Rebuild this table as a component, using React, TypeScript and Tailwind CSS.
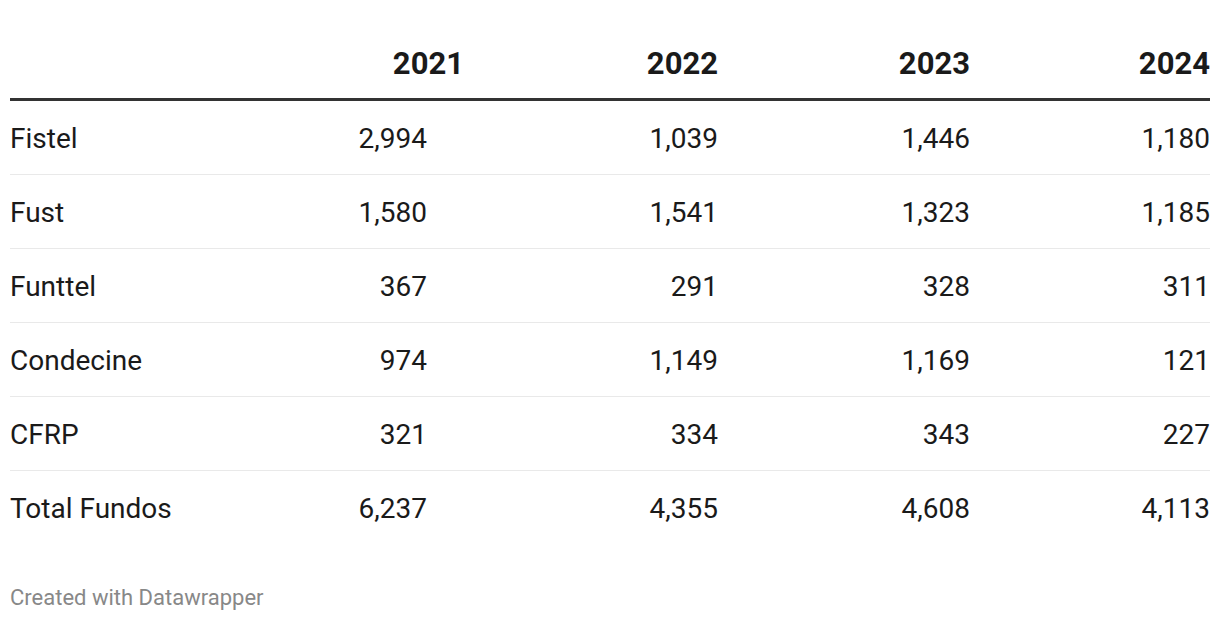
const rows = [
  { label: 'Fistel', values: ['2,994', '1,039', '1,446', '1,180'] },
  { label: 'Fust', values: ['1,580', '1,541', '1,323', '1,185'] },
  { label: 'Funttel', values: ['367', '291', '328', '311'] },
  { label: 'Condecine', values: ['974', '1,149', '1,169', '121'] },
  { label: 'CFRP', values: ['321', '334', '343', '227'] },
  { label: 'Total Fundos', values: ['6,237', '4,355', '4,608', '4,113'] },
]

const years = ['2021', '2022', '2023', '2024']

const cols = 'grid grid-cols-[200px_217px_291px_252px_240px]'

export default function App() {
  return (
    <div className="min-h-screen bg-white px-[10px] font-['Roboto',sans-serif] text-[#1a1a1a]">
      {/* header */}
      <div className="grid h-[101px] grid-cols-[200px_254px_254px_252px_240px] items-end border-b-[3px] border-[#333333] pb-[19px]">
        <div />
        {years.map((y) => (
          <div key={y} className="text-right text-[31px] leading-[31px] font-bold">
            {y}
          </div>
        ))}
      </div>

      {/* body */}
      {rows.map((r, i) => (
        <div
          key={r.label}
          className={`${cols} h-[74px] items-center pt-[2px] text-[28px] leading-[28px] ${
            i < rows.length - 1 ? 'border-b border-[#e9e9e9]' : ''
          }`}
        >
          <div>{r.label}</div>
          {r.values.map((v, j) => (
            <div key={j} className="text-right">
              {v}
            </div>
          ))}
        </div>
      ))}

      {/* footer */}
      <div className="pt-[42px] text-[22px] leading-[22px] text-[#888888]">
        Created with Datawrapper
      </div>
    </div>
  )
}
